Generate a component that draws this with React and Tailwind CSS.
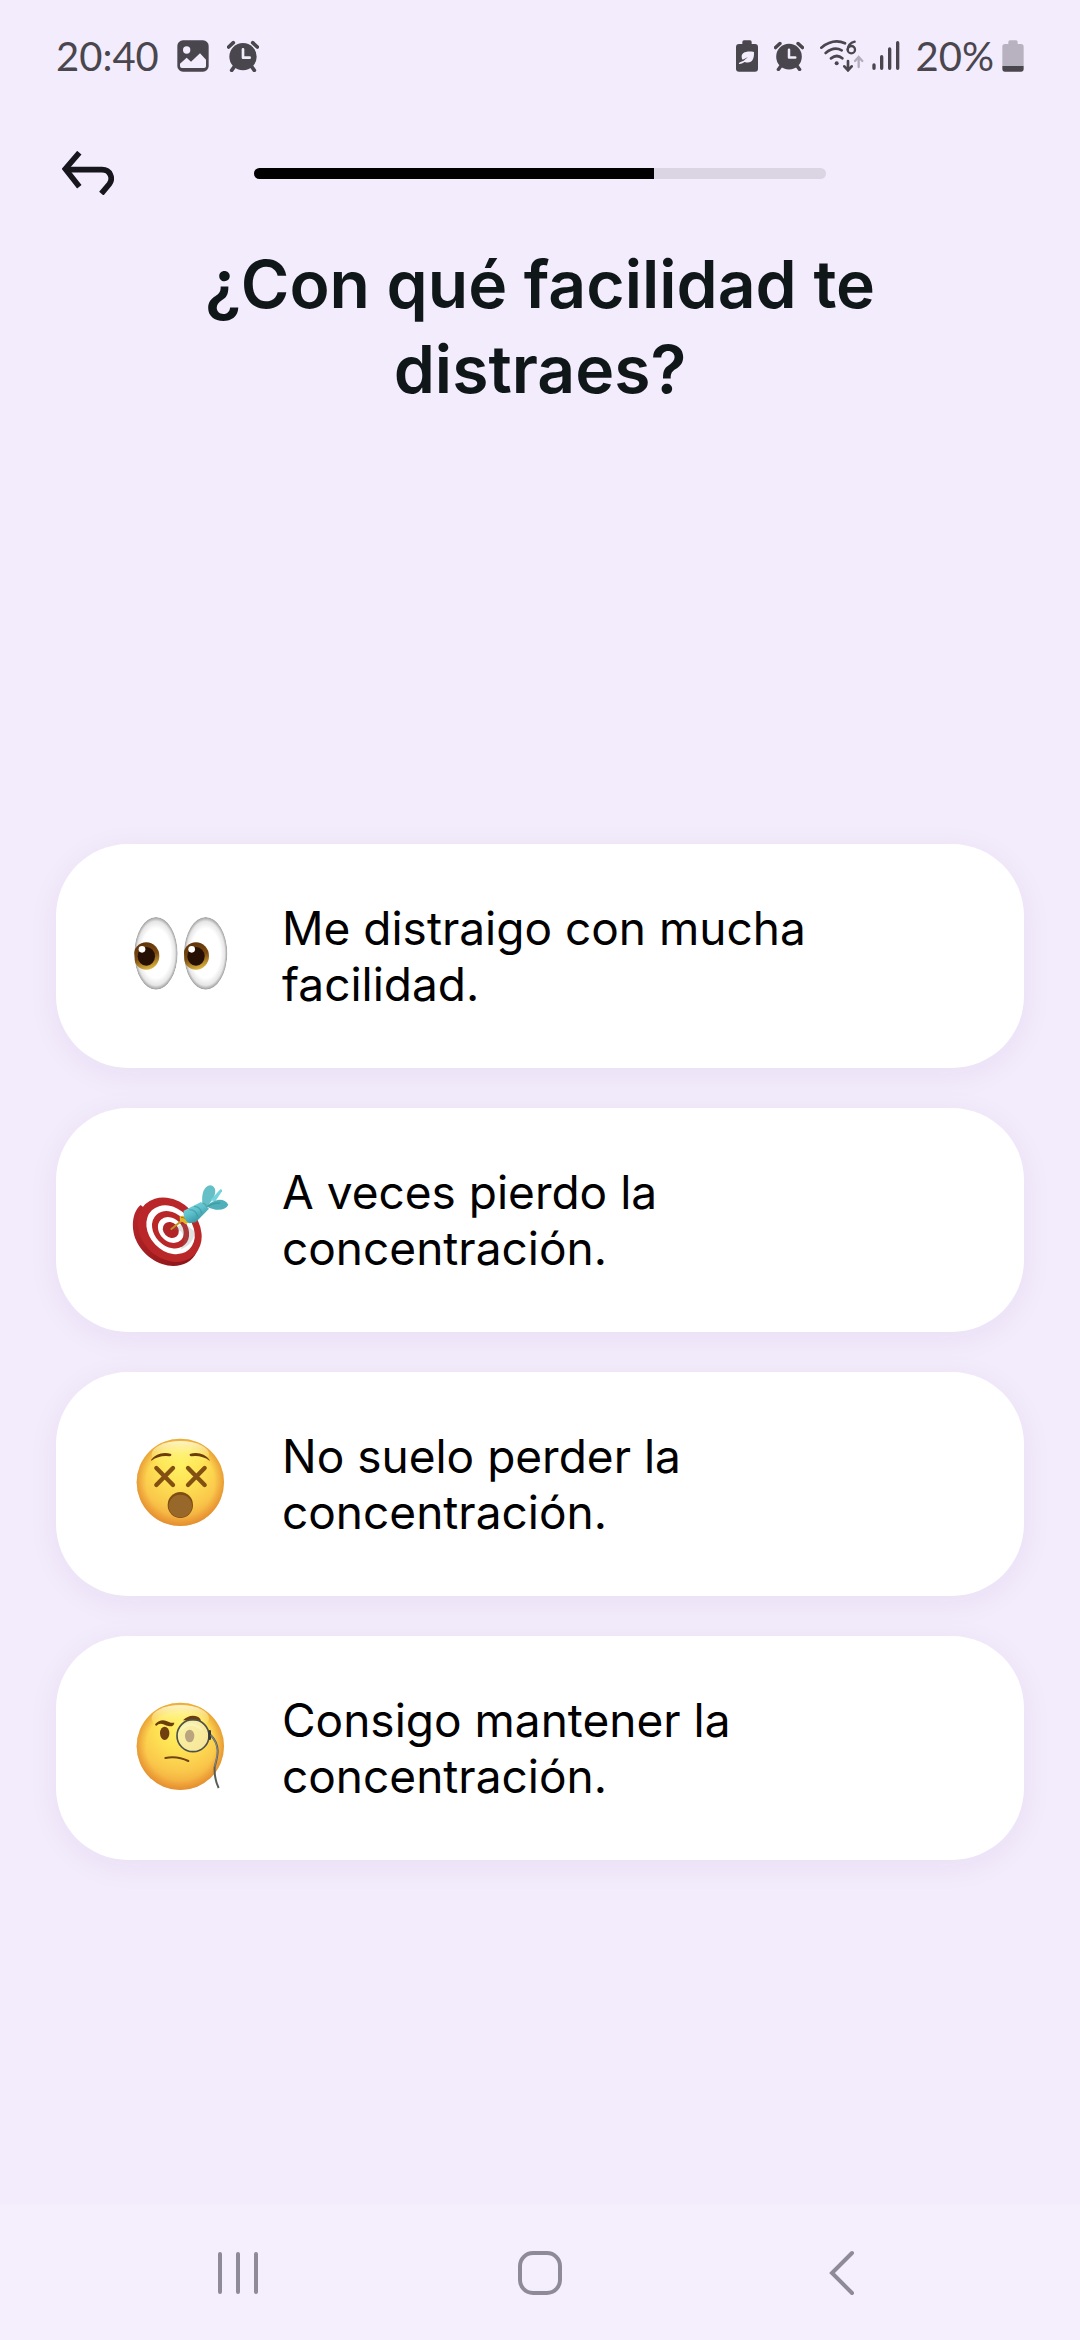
import React from "react";

function AlarmIcon({ className }) {
  return (
    <svg viewBox="0 0 96 96" className={className} fill="currentColor" aria-hidden="true">
      <circle cx="48" cy="50" r="41" />
      <path d="M5 21 19 8M91 21 77 8M22 80 14 91M74 80l8 11" stroke="currentColor" strokeWidth="11" strokeLinecap="round" />
      <path d="M48 28v25h20" fill="none" stroke="#f3ecfc" strokeWidth="8" strokeLinecap="round" strokeLinejoin="round" />
    </svg>
  );
}

function ImageIcon() {
  return (
    <svg viewBox="0 0 96 96" className="size-8" aria-hidden="true">
      <rect x="1" y="1" width="94" height="94" rx="17" fill="currentColor" />
      <circle cx="29" cy="30" r="11" fill="#f3ecfc" />
      <path d="M9 71 29 53l13 12 27-25 18 19v20q0 5-6 5H15q-6 0-6-6z" fill="#f3ecfc" />
    </svg>
  );
}

function SaverIcon() {
  return (
    <svg viewBox="0 0 66 96" className="h-8 w-[22px]" aria-hidden="true">
      <path d="M19 12V6q0-5 5-5h18q5 0 5 5v6h10q9 0 9 9v65q0 9-9 9H9q-9 0-9-9V21q0-9 9-9z" fill="currentColor" />
      <path d="M54 36C29 32 16 39 17 51q0 5 3 8L36 51 22 63C7 67 9 71 9 72c6 1 14-5 17-6 20 6 29-5 28-30z" fill="#f3ecfc" />
    </svg>
  );
}

function WifiIcon() {
  return (
    <svg viewBox="0 0 132 96" className="h-8 w-11" fill="none" stroke="currentColor" strokeWidth="8" strokeLinecap="round" aria-hidden="true">
      <path d="M4 23Q40-6 75 10M17 39Q42 18 65 31M33 55q18-14 34 0" />
      <circle cx="50" cy="70" r="6" fill="currentColor" stroke="none" />
      <path d="M104 5Q84 10 83 29" strokeWidth="7" />
      <circle cx="94" cy="29" r="11" strokeWidth="7" />
      <path d="M84 63v26M73 79l11 12 11-12" />
      <path d="M116 81V54M105 63l11-12 11 12" stroke="#b3acbb" strokeWidth="7" />
    </svg>
  );
}

function SignalIcon() {
  return (
    <svg viewBox="0 0 84 96" className="h-8 w-7" stroke="currentColor" strokeWidth="10" strokeLinecap="round" aria-hidden="true">
      <path d="M6 75v10M29 50v35M53 27v58M77 8v77" />
    </svg>
  );
}

function BatteryIcon() {
  return (
    <svg viewBox="0 0 66 96" className="h-8 w-[22px]" aria-hidden="true">
      <path d="M19 12V6q0-5 5-5h18q5 0 5 5v6h10q8 0 8 8v58H1V20q0-8 8-8z" fill="#b8b1c0" />
      <path d="M1 78h64v8q0 9-8 9H9q-8 0-8-9z" fill="currentColor" />
    </svg>
  );
}

function EyesEmoji() {
  return (
    <svg viewBox="0 18 420 360" className="h-[120px] w-[140px] shrink-0" aria-hidden="true">
      <defs>
        <radialGradient id="eyeWhite">
          <stop offset="0.68" stopColor="#ffffff" />
          <stop offset="0.88" stopColor="#e6e6e6" />
          <stop offset="1" stopColor="#9a9a9c" />
        </radialGradient>
        <linearGradient id="iris" x1="0.35" y1="0" x2="0.65" y2="1">
          <stop offset="0" stopColor="#5e3209" />
          <stop offset="0.5" stopColor="#7b4b10" />
          <stop offset="1" stopColor="#e3bb42" />
        </linearGradient>
        <clipPath id="leftEye"><ellipse cx="138" cy="190" rx="65" ry="109" /></clipPath>
        <clipPath id="rightEye"><ellipse cx="287" cy="190" rx="65" ry="109" /></clipPath>
      </defs>
      {[
        { x: 138, clip: "url(#leftEye)" },
        { x: 287, clip: "url(#rightEye)" },
      ].map(({ x, clip }) => (
        <g key={x} clipPath={clip}>
          <ellipse cx={x} cy="190" rx="65" ry="109" fill="url(#eyeWhite)" />
          <ellipse cx={x - 29} cy="198" rx="39" ry="41" fill="url(#iris)" />
          <ellipse cx={x - 29} cy="199" rx="26" ry="28" fill="#261003" />
          <circle cx={x - 42} cy="178" r="10" fill="#fff" />
        </g>
      ))}
    </svg>
  );
}

function TargetEmoji() {
  return (
    <svg viewBox="0 0 420 360" className="h-[120px] w-[140px] shrink-0" aria-hidden="true">
      <defs>
        <linearGradient id="boardEdge" x1="0" y1="0" x2="1" y2="1">
          <stop offset="0" stopColor="#b8272b" />
          <stop offset="0.55" stopColor="#a11d20" />
          <stop offset="1" stopColor="#861417" />
        </linearGradient>
        <linearGradient id="dartBody" x1="0" y1="0" x2="0.6" y2="1">
          <stop offset="0" stopColor="#7fdbe2" />
          <stop offset="0.5" stopColor="#5fc2cc" />
          <stop offset="1" stopColor="#2f8e9b" />
        </linearGradient>
      </defs>
      <path d="M92 135C64 158 64 208 78 240c18 44 68 78 112 78 30 0 58-15 70-42z" fill="url(#boardEdge)" />
      <g transform="rotate(46 176 212)">
        <ellipse cx="176" cy="208" rx="106" ry="86" fill="#ba2729" />
        <ellipse cx="178" cy="206" rx="81" ry="64" fill="#fff" />
        <ellipse cx="178" cy="206" rx="62" ry="49" fill="#b92729" />
        <ellipse cx="179" cy="206" rx="43" ry="34" fill="#fff" />
        <ellipse cx="179" cy="206" rx="26" ry="22" fill="#b12427" />
      </g>
      <path d="M185 206 224 190 256 216C250 244 234 260 212 268Q232 235 213 214z" fill="#777" opacity="0.22" />
      <path d="M184 207 217 181" stroke="#c39522" strokeWidth="6" strokeLinecap="round" />
      <path d="M209 169q14-5 22 4l8 13-13 7q-5-7-16-9z" fill="#e1b52e" />
      <path d="M213 172q17 1 22 15" fill="none" stroke="#9b7313" strokeWidth="3" />
      <path d="M221 152 273 126 297 146 257 187 238 190Q218 179 221 152z" fill="url(#dartBody)" />
      <path d="M277 129C274 101 282 78 301 76c18 2 19 24 6 43l-17 22z" fill="#64bfc6" />
      <path d="M301 121 331 88q6-2 5 6l-20 30z" fill="#73d4dc" />
      <path d="M289 139Q298 127 323 120q22-3 32 14-9 18-38 15-18-2-28-10z" fill="#4fb0b9" />
      <path d="M277 129q9 2 14 12 16-13 39-12M238 149q21 1 25 21M252 139q20 1 23 21" fill="none" stroke="#338b96" strokeWidth="4" opacity="0.5" />
    </svg>
  );
}

function FaceGradients({ id }) {
  return (
    <defs>
      <radialGradient id={id} cx="0.5" cy="0.28" r="0.74">
        <stop offset="0" stopColor="#fff265" />
        <stop offset="0.35" stopColor="#fee254" />
        <stop offset="0.68" stopColor="#fac84b" />
        <stop offset="1" stopColor="#ee9d38" />
      </radialGradient>
      <radialGradient id={id + "Rim"}>
        <stop offset="0.78" stopColor="#e8862a" stopOpacity="0" />
        <stop offset="1" stopColor="#dc8229" stopOpacity="0.6" />
      </radialGradient>
      <linearGradient id={id + "Shine"} x1="0" y1="0" x2="0" y2="1">
        <stop offset="0" stopColor="#fffbd8" stopOpacity="0.9" />
        <stop offset="1" stopColor="#fff04f" stopOpacity="0" />
      </linearGradient>
    </defs>
  );
}

function DizzyEmoji() {
  return (
    <svg viewBox="0 12 420 360" className="h-[120px] w-[140px] shrink-0" aria-hidden="true">
      <FaceGradients id="dizzy" />
      <circle cx="211" cy="187" r="131" fill="url(#dizzy)" />
      <circle cx="211" cy="187" r="131" fill="url(#dizzyRim)" />
      <ellipse cx="211" cy="103" rx="86" ry="40" fill="url(#dizzyShine)" />
      <path d="M123 120Q145 92 184 102q1 8-6 7-29-4-54 13zM299 120q-22-28-60-18-1 8 6 7 29-4 54 13z" fill="#6d3d08" />
      <path d="m139 144 50 51m0-51-50 51M234 144l50 51m0-51-50 51" stroke="#835011" strokeWidth="13" strokeLinecap="round" />
      <ellipse cx="211" cy="255" rx="38" ry="39" fill="#7f4d12" />
      <ellipse cx="211" cy="258" rx="35" ry="34" fill="#98682a" />
    </svg>
  );
}

function MonocleEmoji() {
  return (
    <svg viewBox="0 24 420 360" className="h-[120px] w-[140px] shrink-0" aria-hidden="true">
      <FaceGradients id="monocle" />
      <circle cx="211" cy="199" r="131" fill="url(#monocle)" />
      <circle cx="211" cy="199" r="131" fill="url(#monocleRim)" />
      <ellipse cx="211" cy="115" rx="86" ry="40" fill="url(#monocleShine)" />
      <path d="M135 133q18-20 40-8 11 5 18 3-1 12-15 11-10-1-18-6-11-5-22 5z" fill="#6b3d0b" />
      <path d="M219 121q21-21 46-10 7 4 8 12z" fill="#6b3d0b" />
      <ellipse cx="164" cy="160" rx="14" ry="20" fill="#704010" />
      <ellipse cx="239" cy="168" rx="14" ry="19" fill="#754713" />
      <circle cx="249" cy="167" r="48" fill="#f3f1d8" fillOpacity="0.55" stroke="#4d504c" strokeWidth="5" />
      <path d="M213 149q28-31 63 0" fill="none" stroke="#fff" strokeWidth="8" opacity="0.25" />
      <path d="M166 234q36-7 69 9" fill="none" stroke="#704410" strokeWidth="6" strokeLinecap="round" />
      <path d="M299 154v22" stroke="#363837" strokeWidth="8" strokeLinecap="round" />
      <path d="M302 165c34 36 18 70 12 96q-2 34 12 63" fill="none" stroke="#595c58" strokeWidth="6" />
      <path d="M303 166c31 36 16 68 11 94" fill="none" stroke="#a2a39d" strokeWidth="2" />
    </svg>
  );
}

const options = [
  { label: "Me distraigo con mucha facilidad.", Emoji: EyesEmoji },
  { label: "A veces pierdo la concentración.", Emoji: TargetEmoji },
  { label: "No suelo perder la concentración.", Emoji: DizzyEmoji },
  { label: "Consigo mantener la concentración.", Emoji: MonocleEmoji },
];

const progress = 70;

export default function App() {
  return (
    <div className="flex min-h-screen flex-col bg-[#f3ecfc] font-['Inter',sans-serif]">
      <div className="flex h-28 items-center justify-between px-14 font-['Lato',sans-serif] text-[40px] leading-10 text-[#4a464e]">
        <div className="flex items-center gap-[18px]">
          <span>20:40</span>
          <ImageIcon />
          <AlarmIcon className="size-8" />
        </div>
        <div className="flex items-center gap-4">
          <SaverIcon />
          <AlarmIcon className="size-[30px]" />
          <div className="flex items-center gap-2">
            <WifiIcon />
            <SignalIcon />
          </div>
          <div className="flex items-center gap-2">
            <span>20%</span>
            <BatteryIcon />
          </div>
        </div>
      </div>

      <header className="grid h-[122px] grid-cols-[1fr_53%_1fr] items-center">
        <button type="button" aria-label="Volver" className="ml-14 flex size-16 items-center justify-center text-[#18161d]">
          <svg viewBox="0 0 156 132" className="h-11 w-13" fill="none" stroke="currentColor" strokeWidth="17" aria-hidden="true">
            <path d="M52 5 10 54l42 53" />
            <path d="M12 56h108c26 0 34 27 22 43l-24 29" />
          </svg>
        </button>
        <div role="progressbar" aria-label="Progreso" aria-valuenow={progress} aria-valuemin={0} aria-valuemax={100} className="h-[11px] overflow-hidden rounded-full bg-[#dbd4e3]">
          <div className="h-full bg-black" style={{ width: `${progress}%` }} />
        </div>
      </header>

      <main className="flex flex-col px-14">
        <h1 className="mx-auto mt-2 max-w-[760px] text-center text-[66px] leading-[85px] font-semibold text-[#101719]">
          ¿Con qué facilidad te distraes?
        </h1>
        <div className="mt-[432px] flex flex-col gap-10">
          {options.map(({ label, Emoji }) => (
            <button
              key={label}
              type="button"
              className="flex h-56 items-center gap-8 rounded-[72px] bg-white pr-14 pl-[54px] text-left text-[46px] leading-[56px] text-black shadow-[0_6px_32px_rgba(60,40,110,0.06)]"
            >
              <Emoji />
              <span className="max-w-[560px]">{label}</span>
            </button>
          ))}
        </div>
      </main>

      <nav className="mt-auto grid h-[135px] grid-cols-[1fr_auto_1fr] items-center bg-[#f5effd] px-[206px] text-[#8f8a98]">
        <button type="button" aria-label="Recientes" className="flex size-16 items-center justify-center">
          <svg viewBox="0 0 44 46" className="h-[46px] w-11" stroke="currentColor" strokeWidth="4" strokeLinecap="round" aria-hidden="true">
            <path d="M4 4v38M22 4v38M40 4v38" />
          </svg>
        </button>
        <button type="button" aria-label="Inicio" className="flex size-16 items-center justify-center">
          <svg viewBox="0 0 46 46" className="size-[46px]" fill="none" stroke="currentColor" strokeWidth="4" aria-hidden="true">
            <rect x="3" y="3" width="40" height="40" rx="13" />
          </svg>
        </button>
        <button type="button" aria-label="Atrás" className="flex size-16 items-center justify-center justify-self-end">
          <svg viewBox="0 0 28 46" className="h-[46px] w-7" fill="none" stroke="currentColor" strokeWidth="4" strokeLinecap="round" aria-hidden="true">
            <path d="M24 3 4 23l20 20" />
          </svg>
        </button>
      </nav>
    </div>
  );
}
